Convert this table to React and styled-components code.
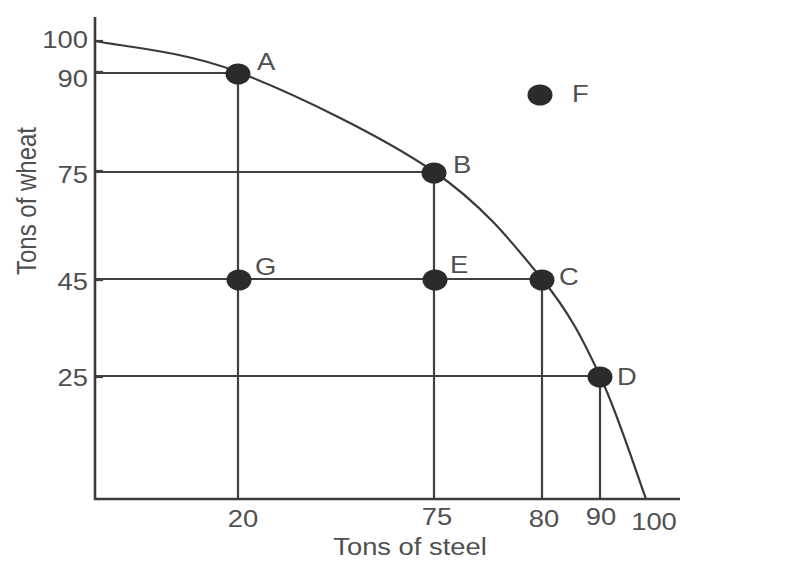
import styled, { createGlobalStyle } from 'styled-components'

const GlobalStyle = createGlobalStyle`
  html, body {
    margin: 0;
    padding: 0;
    background: #ffffff;
  }
`;

// pixel positions read off the original figure (scale is not linear)
const X_AXIS_Y = 499;
const Y_AXIS_X = 95;
const STRETCH = 1.14;

const yTicks = [
  { label: '100', y: 41, baseline: 48 },
  { label: '90', y: 72, baseline: 87 },
  { label: '75', y: 171, baseline: 183 },
  { label: '45', y: 280, baseline: 290 },
  { label: '25', y: 377, baseline: 386 },
];

const xTicks = [
  { label: '20', x: 243, baseline: 527 },
  { label: '75', x: 437, baseline: 525 },
  { label: '80', x: 544, baseline: 527 },
  { label: '90', x: 601, baseline: 525 },
  { label: '100', x: 654, baseline: 530 },
];

const points = [
  { name: 'A', cx: 238, cy: 74, lx: 257, ly: 70, guides: true },
  { name: 'B', cx: 434, cy: 173, lx: 453, ly: 173, guides: true },
  { name: 'C', cx: 542, cy: 280, lx: 559, ly: 285, guides: true },
  { name: 'D', cx: 600, cy: 377, lx: 617, ly: 385, guides: true },
  { name: 'E', cx: 435, cy: 280, lx: 450, ly: 273 },
  { name: 'G', cx: 239, cy: 280, lx: 255, ly: 275 },
  { name: 'F', cx: 540, cy: 95, lx: 572, ly: 102 },
];

const frontier = [
  [95, 41], [238, 72], [433, 171], [542, 279], [600, 376], [646, 499],
];

const smoothPath = (pts) => {
  let d = `M ${pts[0][0]} ${pts[0][1]}`;
  for (let i = 0; i < pts.length - 1; i++) {
    const p0 = pts[i - 1] || pts[i];
    const p1 = pts[i];
    const p2 = pts[i + 1];
    const p3 = pts[i + 2] || p2;
    const c1 = [p1[0] + (p2[0] - p0[0]) / 6, p1[1] + (p2[1] - p0[1]) / 6];
    const c2 = [p2[0] - (p3[0] - p1[0]) / 6, p2[1] - (p3[1] - p1[1]) / 6];
    d += ` C ${c1[0]} ${c1[1]}, ${c2[0]} ${c2[1]}, ${p2[0]} ${p2[1]}`;
  }
  return d;
};

const App = () => {
  return (
    <Page>
      <GlobalStyle/>
      <Chart viewBox="0 0 811 579" width="811" height="579">
        {yTicks.map(({ label, y, baseline }) => (
          <g key={'y' + label}>
            <GuideLine x1={Y_AXIS_X} y1={y} x2={Y_AXIS_X + 8} y2={y}/>
            <Label transform={`translate(88 ${baseline}) scale(${STRETCH} 1)`} textAnchor="end">{label}</Label>
          </g>
        ))}

        {xTicks.map(({ label, x, baseline }) => (
          <Label key={'x' + label} transform={`translate(${x} ${baseline}) scale(${STRETCH} 1)`} textAnchor="middle">{label}</Label>
        ))}

        {points.filter(p => p.guides).map(({ name, cx, cy }) => (
          <g key={'g' + name}>
            <GuideLine x1={Y_AXIS_X} y1={cy - 1} x2={cx} y2={cy - 1}/>
            <GuideLine x1={cx} y1={cy} x2={cx} y2={X_AXIS_Y}/>
          </g>
        ))}

        <Curve d={smoothPath(frontier)}/>

        <AxisLine x1={Y_AXIS_X} y1={17} x2={Y_AXIS_X} y2={X_AXIS_Y + 1}/>
        <AxisLine x1={Y_AXIS_X - 1} y1={X_AXIS_Y} x2={680} y2={X_AXIS_Y}/>

        {points.map(({ name, cx, cy, lx, ly }) => (
          <g key={name}>
            <Dot cx={cx} cy={cy} rx={12.5} ry={10.5}/>
            <Label transform={`translate(${lx} ${ly}) scale(${STRETCH} 1)`}>{name}</Label>
          </g>
        ))}

        <Label transform={`translate(410 555) scale(${STRETCH} 1)`} textAnchor="middle">Tons of steel</Label>
        <Label transform={`translate(36 201) scale(${STRETCH} 1) rotate(-90)`} textAnchor="middle">Tons of wheat</Label>
      </Chart>
    </Page>
  );
};

const Page = styled.div`
  width: 811px;
  height: 579px;
  background: #ffffff;
  overflow: hidden;
`;

const Chart = styled.svg`
  display: block;
`;

const Label = styled.text`
  font-family: "Liberation Sans", Arial, sans-serif;
  font-size: 24px;
  fill: #505050;
`;

const AxisLine = styled.line`
  stroke: #3c3c3c;
  stroke-width: 2.6;
`;

const GuideLine = styled.line`
  stroke: #404040;
  stroke-width: 2.2;
`;

const Curve = styled.path`
  fill: none;
  stroke: #3a3a3a;
  stroke-width: 2.2;
`;

const Dot = styled.ellipse`
  fill: #2b2b2b;
`;

export default App;
